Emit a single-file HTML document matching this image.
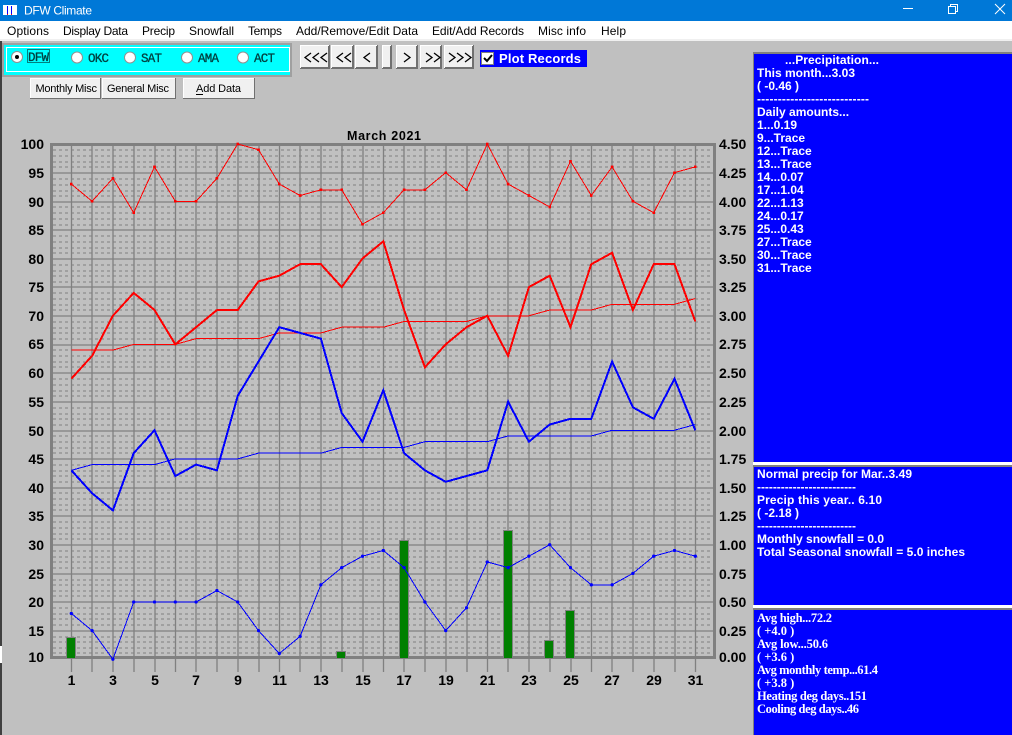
<!DOCTYPE html>
<html><head><meta charset="utf-8"><title>DFW Climate</title>
<style>
html,body{margin:0;padding:0;background:#c0c0c0;overflow:hidden}
svg{display:block}
.m{font:12px "Liberation Sans",sans-serif;fill:#000}
.a{font:bold 14px "Liberation Sans",sans-serif;fill:#000}
.p{font:bold 12px "Liberation Sans",sans-serif;fill:#fff}
.s{font:bold 12.500px "Liberation Serif",serif;fill:#fff}
.r{font:12.500px "Liberation Mono",monospace;fill:#004040;stroke:#004040;stroke-width:.3px}
.b{font:11px "Liberation Sans",sans-serif;fill:#000}
</style></head><body>
<svg xmlns="http://www.w3.org/2000/svg" width="1012" height="735" viewBox="0 0 1012 735">
<defs>
<marker id="dr" markerUnits="userSpaceOnUse" markerWidth="0.13" markerHeight="0.47" refX="1.35" refY="1.35" viewBox="0 0 2.700 2.700" preserveAspectRatio="none"><rect width="2.700" height="2.700" fill="#f00"/></marker>
<marker id="db" markerUnits="userSpaceOnUse" markerWidth="0.16" markerHeight="0.58" refX="1.65" refY="1.65" viewBox="0 0 3.300 3.300" preserveAspectRatio="none"><circle cx="1.65" cy="1.65" r="1.65" fill="#00f"/></marker>
</defs>
<rect width="1012" height="735" fill="#c0c0c0"/>
<!-- title bar -->
<rect width="1012" height="21" fill="#0078d7"/>
<rect x="3" y="5" width="14" height="10" fill="#fff"/>
<path d="M7.500 6V14M11.500 6V14" stroke="#00f" stroke-width="1"/><path d="M7 14.500h1M11 14.500h1" stroke="#f00"/>
<text x="24" y="14.500" style="font:12px 'Liberation Sans',sans-serif;fill:#fff" textLength="68">DFW Climate</text>
<path d="M903 8.500H913" stroke="#fff"/>
<path d="M948.500 6.500h7v7h-7zM950.500 6.500v-2h7v7h-2" fill="none" stroke="#fff"/>
<path d="M995 4l10 10M1005 4l-10 10" stroke="#fff"/>
<!-- menu -->
<rect y="21" width="1012" height="18" fill="#fff"/>
<rect y="39" width="1012" height="2" fill="#f0f0f0"/>
<text class="m" x="7" y="35" textLength="42">Options</text>
<text class="m" x="63" y="35" textLength="65">Display Data</text>
<text class="m" x="142" y="35" textLength="33">Precip</text>
<text class="m" x="189" y="35" textLength="45">Snowfall</text>
<text class="m" x="248" y="35" textLength="34">Temps</text>
<text class="m" x="296" y="35" textLength="122">Add/Remove/Edit Data</text>
<text class="m" x="432" y="35" textLength="92">Edit/Add Records</text>
<text class="m" x="538" y="35" textLength="48">Misc info</text>
<text class="m" x="601" y="35" textLength="25">Help</text>
<!-- left window edge -->
<rect y="41" width="2" height="605" fill="#404040"/>
<rect y="646" width="2" height="17" fill="#fff"/>
<rect y="663" width="2" height="72" fill="#404040"/>
<!-- station radios -->
<rect x="2" y="43" width="290" height="34" fill="#a0a0a0"/>
<rect x="4" y="45" width="286" height="30" fill="#0ff"/>
<rect x="6.500" y="47.500" width="283" height="24" fill="none" stroke="#fff"/>
<g fill="#fff" stroke="#909090">
<circle cx="17" cy="57" r="5.500"/><circle cx="77" cy="57.500" r="5.500"/><circle cx="130" cy="57.500" r="5.500"/><circle cx="187" cy="57.500" r="5.500"/><circle cx="243" cy="57.500" r="5.500"/>
</g>
<circle cx="17" cy="57" r="2" fill="#000"/>
<rect x="27.500" y="49.500" width="22" height="13" fill="none" stroke="#000" stroke-dasharray="1 1"/>
<text class="r" x="28" y="61" textLength="21">DFW</text>
<text class="r" x="88" y="62" textLength="21">OKC</text>
<text class="r" x="141" y="62" textLength="21">SAT</text>
<text class="r" x="198" y="62" textLength="21">AMA</text>
<text class="r" x="254" y="62" textLength="21">ACT</text>
<!-- small buttons -->
<g shape-rendering="crispEdges">
<rect x="30" y="78" width="71" height="21" fill="#f0f0f0"/><path d="M30 98.500H100.500V78" fill="none" stroke="#707070"/><path d="M30 78.500H100M30.500 78V98" stroke="#fff"/>
<rect x="102" y="78" width="73" height="21" fill="#f0f0f0"/><path d="M102 98.500H175.500V78" fill="none" stroke="#707070"/><path d="M102 78.500H175M102.500 78V98" stroke="#fff"/>
<rect x="183" y="78" width="72" height="21" fill="#f0f0f0"/><path d="M183 98.500H254.500V78" fill="none" stroke="#707070"/><path d="M183 78.500H254M183.500 78V98" stroke="#fff"/>
</g>
<text class="b" x="35.500" y="92" textLength="61.500">Monthly Misc</text>
<text class="b" x="107" y="92" textLength="62">General Misc</text>
<text class="b" x="196" y="92" textLength="45">Add Data</text>
<path d="M196 94.500h7" stroke="#000"/>
<!-- nav buttons -->
<g shape-rendering="crispEdges">
<g fill="#f0f0f0">
<rect x="300" y="45" width="30" height="24"/><rect x="331" y="45" width="23" height="24"/><rect x="355" y="45" width="23" height="24"/><rect x="382" y="45" width="10" height="24"/><rect x="396" y="45" width="22" height="24"/><rect x="420" y="45" width="22" height="24"/><rect x="444" y="45" width="30" height="24"/>
</g>
<path fill="none" stroke="#707070" stroke-width="2" d="M300 68H329V45M331 68H353V45M355 68H377V45M382 68H391V45M396 68H417V45M420 68H441V45M444 68H473V45"/>
<path fill="none" stroke="#fff" d="M300.500 68V45.500H329M331.500 68V45.500H353M355.500 68V45.500H377M382.500 68V45.500H391M396.500 68V45.500H417M420.500 68V45.500H441M444.500 68V45.500H473"/>
</g>
<g fill="none" stroke="#000" stroke-width="1.300">
<path d="M311 53l-6 4.500 6 4.500M319 53l-6 4.500 6 4.500M327 53l-6 4.500 6 4.500"/>
<path d="M343 53l-6 4.500 6 4.500M351 53l-6 4.500 6 4.500"/>
<path d="M370 53l-6 4.500 6 4.500"/>
<path d="M404 53l6 4.500-6 4.500"/>
<path d="M426 53l6 4.500-6 4.500M434 53l6 4.500-6 4.500"/>
<path d="M449 53l6 4.500-6 4.500M457 53l6 4.500-6 4.500M465 53l6 4.500-6 4.500"/>
</g>
<rect x="480" y="50" width="107" height="17" fill="#00f"/>
<rect x="481.500" y="52.500" width="12" height="12" fill="#fff" stroke="#808080"/>
<path d="M484 58l3 3 5-6" fill="none" stroke="#000" stroke-width="2"/>
<text x="499" y="63" style="font:bold 13px 'Liberation Sans',sans-serif;fill:#fff" textLength="82">Plot Records</text>
<!-- chart -->
<text x="347" y="140" style="font:bold 12.500px 'Liberation Sans',sans-serif;fill:#000" textLength="74">March 2021</text>
<g shape-rendering="crispEdges">
<path fill="none" stroke="#808080" stroke-dasharray="3 3" d="M53 150H714M53 156H714M53 162H714M53 167H714M53 179H714M53 185H714M53 191H714M53 196H714M53 207H714M53 213H714M53 219H714M53 225H714M53 236H714M53 242H714M53 248H714M53 253H714M53 265H714M53 271H714M53 276H714M53 282H714M53 293H714M53 299H714M53 305H714M53 310H714M53 322H714M53 328H714M53 333H714M53 339H714M53 350H714M53 356H714M53 362H714M53 367H714M53 379H714M53 385H714M53 391H714M53 396H714M53 408H714M53 414H714M53 419H714M53 425H714M53 436H714M53 442H714M53 448H714M53 453H714M53 465H714M53 471H714M53 476H714M53 482H714M53 493H714M53 499H714M53 505H714M53 510H714M53 522H714M53 528H714M53 534H714M53 539H714M53 551H714M53 557H714M53 562H714M53 568H714M53 580H714M53 585H714M53 591H714M53 596H714M53 608H714M53 614H714M53 619H714M53 625H714M53 637H714M53 642H714M53 648H714M53 653H714"/>
</g>
<path fill="none" stroke="#808080" stroke-width="1.300" d="M51 173H715M51 202H715M51 230H715M51 259H715M51 287H715M51 316H715M51 345H715M51 373H715M51 402H715M51 431H715M51 459H715M51 488H715M51 516H715M51 545H715M51 574H715M51 602H715M51 631H715"/>
<path fill="none" stroke="#808080" stroke-width="1.300" d="M71.500 144V672M92 144V672M113 144V672M134 144V672M155 144V672M175.500 144V672M196 144V672M217 144V672M238 144V672M259 144V672M279.500 144V672M300 144V672M321 144V672M342 144V672M363 144V672M383.500 144V672M404 144V672M425 144V672M446 144V672M467 144V672M487.500 144V672M508 144V672M529 144V672M550 144V672M571 144V672M591.500 144V672M612 144V672M633 144V672M654 144V672M675 144V672M695.500 144V672"/>
<g shape-rendering="crispEdges">
<rect x="51.500" y="144.500" width="663" height="513" fill="none" stroke="#808080" stroke-width="3"/>
<!-- bars -->
<g fill="#008000" stroke="#808080">
<rect x="66.500" y="637.500" width="9" height="21"/>
<rect x="336.500" y="651.500" width="9" height="7"/>
<rect x="399.500" y="540.500" width="9" height="118"/>
<rect x="503.500" y="530.500" width="9" height="128"/>
<rect x="544.500" y="640.500" width="9" height="18"/>
<rect x="565.500" y="610.500" width="9" height="48"/>
</g>
</g>
<!-- series in data units: x=day-1, y=value -->
<g transform="translate(71.3,716.5) scale(20.8,-5.725)" fill="none" shape-rendering="crispEdges">
<polyline vector-effect="non-scaling-stroke" stroke="#f00" stroke-width="1" marker-start="url(#dr)" marker-mid="url(#dr)" marker-end="url(#dr)" points="0,93 1,90 2,94 3,88 4,96 5,90 6,90 7,94 8,100 9,99 10,93 11,91 12,92 13,92 14,86 15,88 16,92 17,92 18,95 19,92 20,100 21,93 22,91 23,89 24,97 25,91 26,96 27,90 28,88 29,95 30,96"/>
<polyline vector-effect="non-scaling-stroke" stroke="#f00" stroke-width="1" points="0,64 1,64 2,64 3,65 4,65 5,65 6,66 7,66 8,66 9,66 10,67 11,67 12,67 13,68 14,68 15,68 16,69 17,69 18,69 19,69 20,70 21,70 22,70 23,71 24,71 25,71 26,72 27,72 28,72 29,72 30,73"/>
<polyline vector-effect="non-scaling-stroke" stroke="#f00" stroke-width="2" points="0,59 1,63 2,70 3,74 4,71 5,65 6,68 7,71 8,71 9,76 10,77 11,79 12,79 13,75 14,80 15,83 16,71 17,61 18,65 19,68 20,70 21,63 22,75 23,77 24,68 25,79 26,81 27,71 28,79 29,79 30,69"/>
<polyline vector-effect="non-scaling-stroke" stroke="#00f" stroke-width="1" points="0,43 1,44 2,44 3,44 4,44 5,45 6,45 7,45 8,45 9,46 10,46 11,46 12,46 13,47 14,47 15,47 16,47 17,48 18,48 19,48 20,48 21,49 22,49 23,49 24,49 25,49 26,50 27,50 28,50 29,50 30,51"/>
<polyline vector-effect="non-scaling-stroke" stroke="#00f" stroke-width="2" points="0,43 1,39 2,36 3,46 4,50 5,42 6,44 7,43 8,56 9,62 10,68 11,67 12,66 13,53 14,48 15,57 16,46 17,43 18,41 19,42 20,43 21,55 22,48 23,51 24,52 25,52 26,62 27,54 28,52 29,59 30,50"/>
<polyline vector-effect="non-scaling-stroke" stroke="#00f" stroke-width="1" marker-start="url(#db)" marker-mid="url(#db)" marker-end="url(#db)" points="0,18 1,15 2,10 3,20 4,20 5,20 6,20 7,22 8,20 9,15 10,11 11,14 12,23 13,26 14,28 15,29 16,26 17,20 18,15 19,19 20,27 21,26 22,28 23,30 24,26 25,23 26,23 27,25 28,28 29,29 30,28"/>
</g>
<!-- left axis -->
<g text-anchor="end">
<text class="a" x="44" y="149">100</text><text class="a" x="44" y="178">95</text><text class="a" x="44" y="207">90</text><text class="a" x="44" y="235">85</text><text class="a" x="44" y="264">80</text><text class="a" x="44" y="292">75</text><text class="a" x="44" y="321">70</text><text class="a" x="44" y="349">65</text><text class="a" x="44" y="378">60</text><text class="a" x="44" y="407">55</text><text class="a" x="44" y="436">50</text><text class="a" x="44" y="464">45</text><text class="a" x="44" y="493">40</text><text class="a" x="44" y="521">35</text><text class="a" x="44" y="550">30</text><text class="a" x="44" y="579">25</text><text class="a" x="44" y="607">20</text><text class="a" x="44" y="636">15</text><text class="a" x="44" y="662">10</text>
</g>
<!-- right axis -->
<g>
<text class="a" x="719" y="149">4.50</text><text class="a" x="719" y="178">4.25</text><text class="a" x="719" y="207">4.00</text><text class="a" x="719" y="235">3.75</text><text class="a" x="719" y="264">3.50</text><text class="a" x="719" y="292">3.25</text><text class="a" x="719" y="321">3.00</text><text class="a" x="719" y="349">2.75</text><text class="a" x="719" y="378">2.50</text><text class="a" x="719" y="407">2.25</text><text class="a" x="719" y="436">2.00</text><text class="a" x="719" y="464">1.75</text><text class="a" x="719" y="493">1.50</text><text class="a" x="719" y="521">1.25</text><text class="a" x="719" y="550">1.00</text><text class="a" x="719" y="579">0.75</text><text class="a" x="719" y="607">0.50</text><text class="a" x="719" y="636">0.25</text><text class="a" x="719" y="662">0.00</text>
</g>
<!-- x axis -->
<g text-anchor="middle">
<text class="a" x="71.500" y="685">1</text><text class="a" x="113" y="685">3</text><text class="a" x="155" y="685">5</text><text class="a" x="196" y="685">7</text><text class="a" x="238" y="685">9</text><text class="a" x="279.500" y="685">11</text><text class="a" x="321" y="685">13</text><text class="a" x="363" y="685">15</text><text class="a" x="404" y="685">17</text><text class="a" x="446" y="685">19</text><text class="a" x="487.500" y="685">21</text><text class="a" x="529" y="685">23</text><text class="a" x="571" y="685">25</text><text class="a" x="612" y="685">27</text><text class="a" x="654" y="685">29</text><text class="a" x="695.500" y="685">31</text>
</g>
<!-- panels -->
<rect x="753" y="52" width="259" height="683" fill="#808080"/>
<rect x="754" y="54" width="258" height="408" fill="#00f"/>
<rect x="753" y="462" width="259" height="3" fill="#fff"/>
<rect x="753" y="465" width="259" height="2" fill="#808080"/>
<rect x="754" y="467" width="258" height="138" fill="#00f"/>
<rect x="753" y="605" width="259" height="3" fill="#fff"/>
<rect x="753" y="608" width="259" height="2" fill="#808080"/>
<rect x="754" y="610" width="258" height="125" fill="#00f"/>
<text class="p" x="785" y="64" textLength="94">...Precipitation...</text>
<text class="p" x="757" y="77" textLength="98">This month...3.03</text>
<text class="p" x="757" y="90">( -0.46 )</text>
<text class="p" x="757" y="103" textLength="112">---------------------------</text>
<text class="p" x="757" y="116">Daily amounts...</text>
<text class="p" x="757" y="129">1...0.19</text>
<text class="p" x="757" y="142">9...Trace</text>
<text class="p" x="757" y="155">12...Trace</text>
<text class="p" x="757" y="168">13...Trace</text>
<text class="p" x="757" y="181">14...0.07</text>
<text class="p" x="757" y="194">17...1.04</text>
<text class="p" x="757" y="207">22...1.13</text>
<text class="p" x="757" y="220">24...0.17</text>
<text class="p" x="757" y="233">25...0.43</text>
<text class="p" x="757" y="246">27...Trace</text>
<text class="p" x="757" y="259">30...Trace</text>
<text class="p" x="757" y="272">31...Trace</text>
<text class="p" x="757" y="478" textLength="155">Normal precip for Mar..3.49</text>
<text class="p" x="757" y="491" textLength="99">-------------------------</text>
<text class="p" x="757" y="504" textLength="125">Precip this year.. 6.10</text>
<text class="p" x="757" y="517">( -2.18 )</text>
<text class="p" x="757" y="530" textLength="99">-------------------------</text>
<text class="p" x="757" y="543" textLength="127">Monthly snowfall = 0.0</text>
<text class="p" x="757" y="556" textLength="208">Total Seasonal snowfall = 5.0 inches</text>
<text class="s" x="757" y="622" textLength="75">Avg high...72.2</text>
<text class="s" x="757" y="635">( +4.0 )</text>
<text class="s" x="757" y="648" textLength="71">Avg low...50.6</text>
<text class="s" x="757" y="661">( +3.6 )</text>
<text class="s" x="757" y="674" textLength="121">Avg monthly temp...61.4</text>
<text class="s" x="757" y="687">( +3.8 )</text>
<text class="s" x="757" y="700" textLength="110">Heating deg days..151</text>
<text class="s" x="757" y="713" textLength="102">Cooling deg days..46</text>
</svg>
</body></html>
